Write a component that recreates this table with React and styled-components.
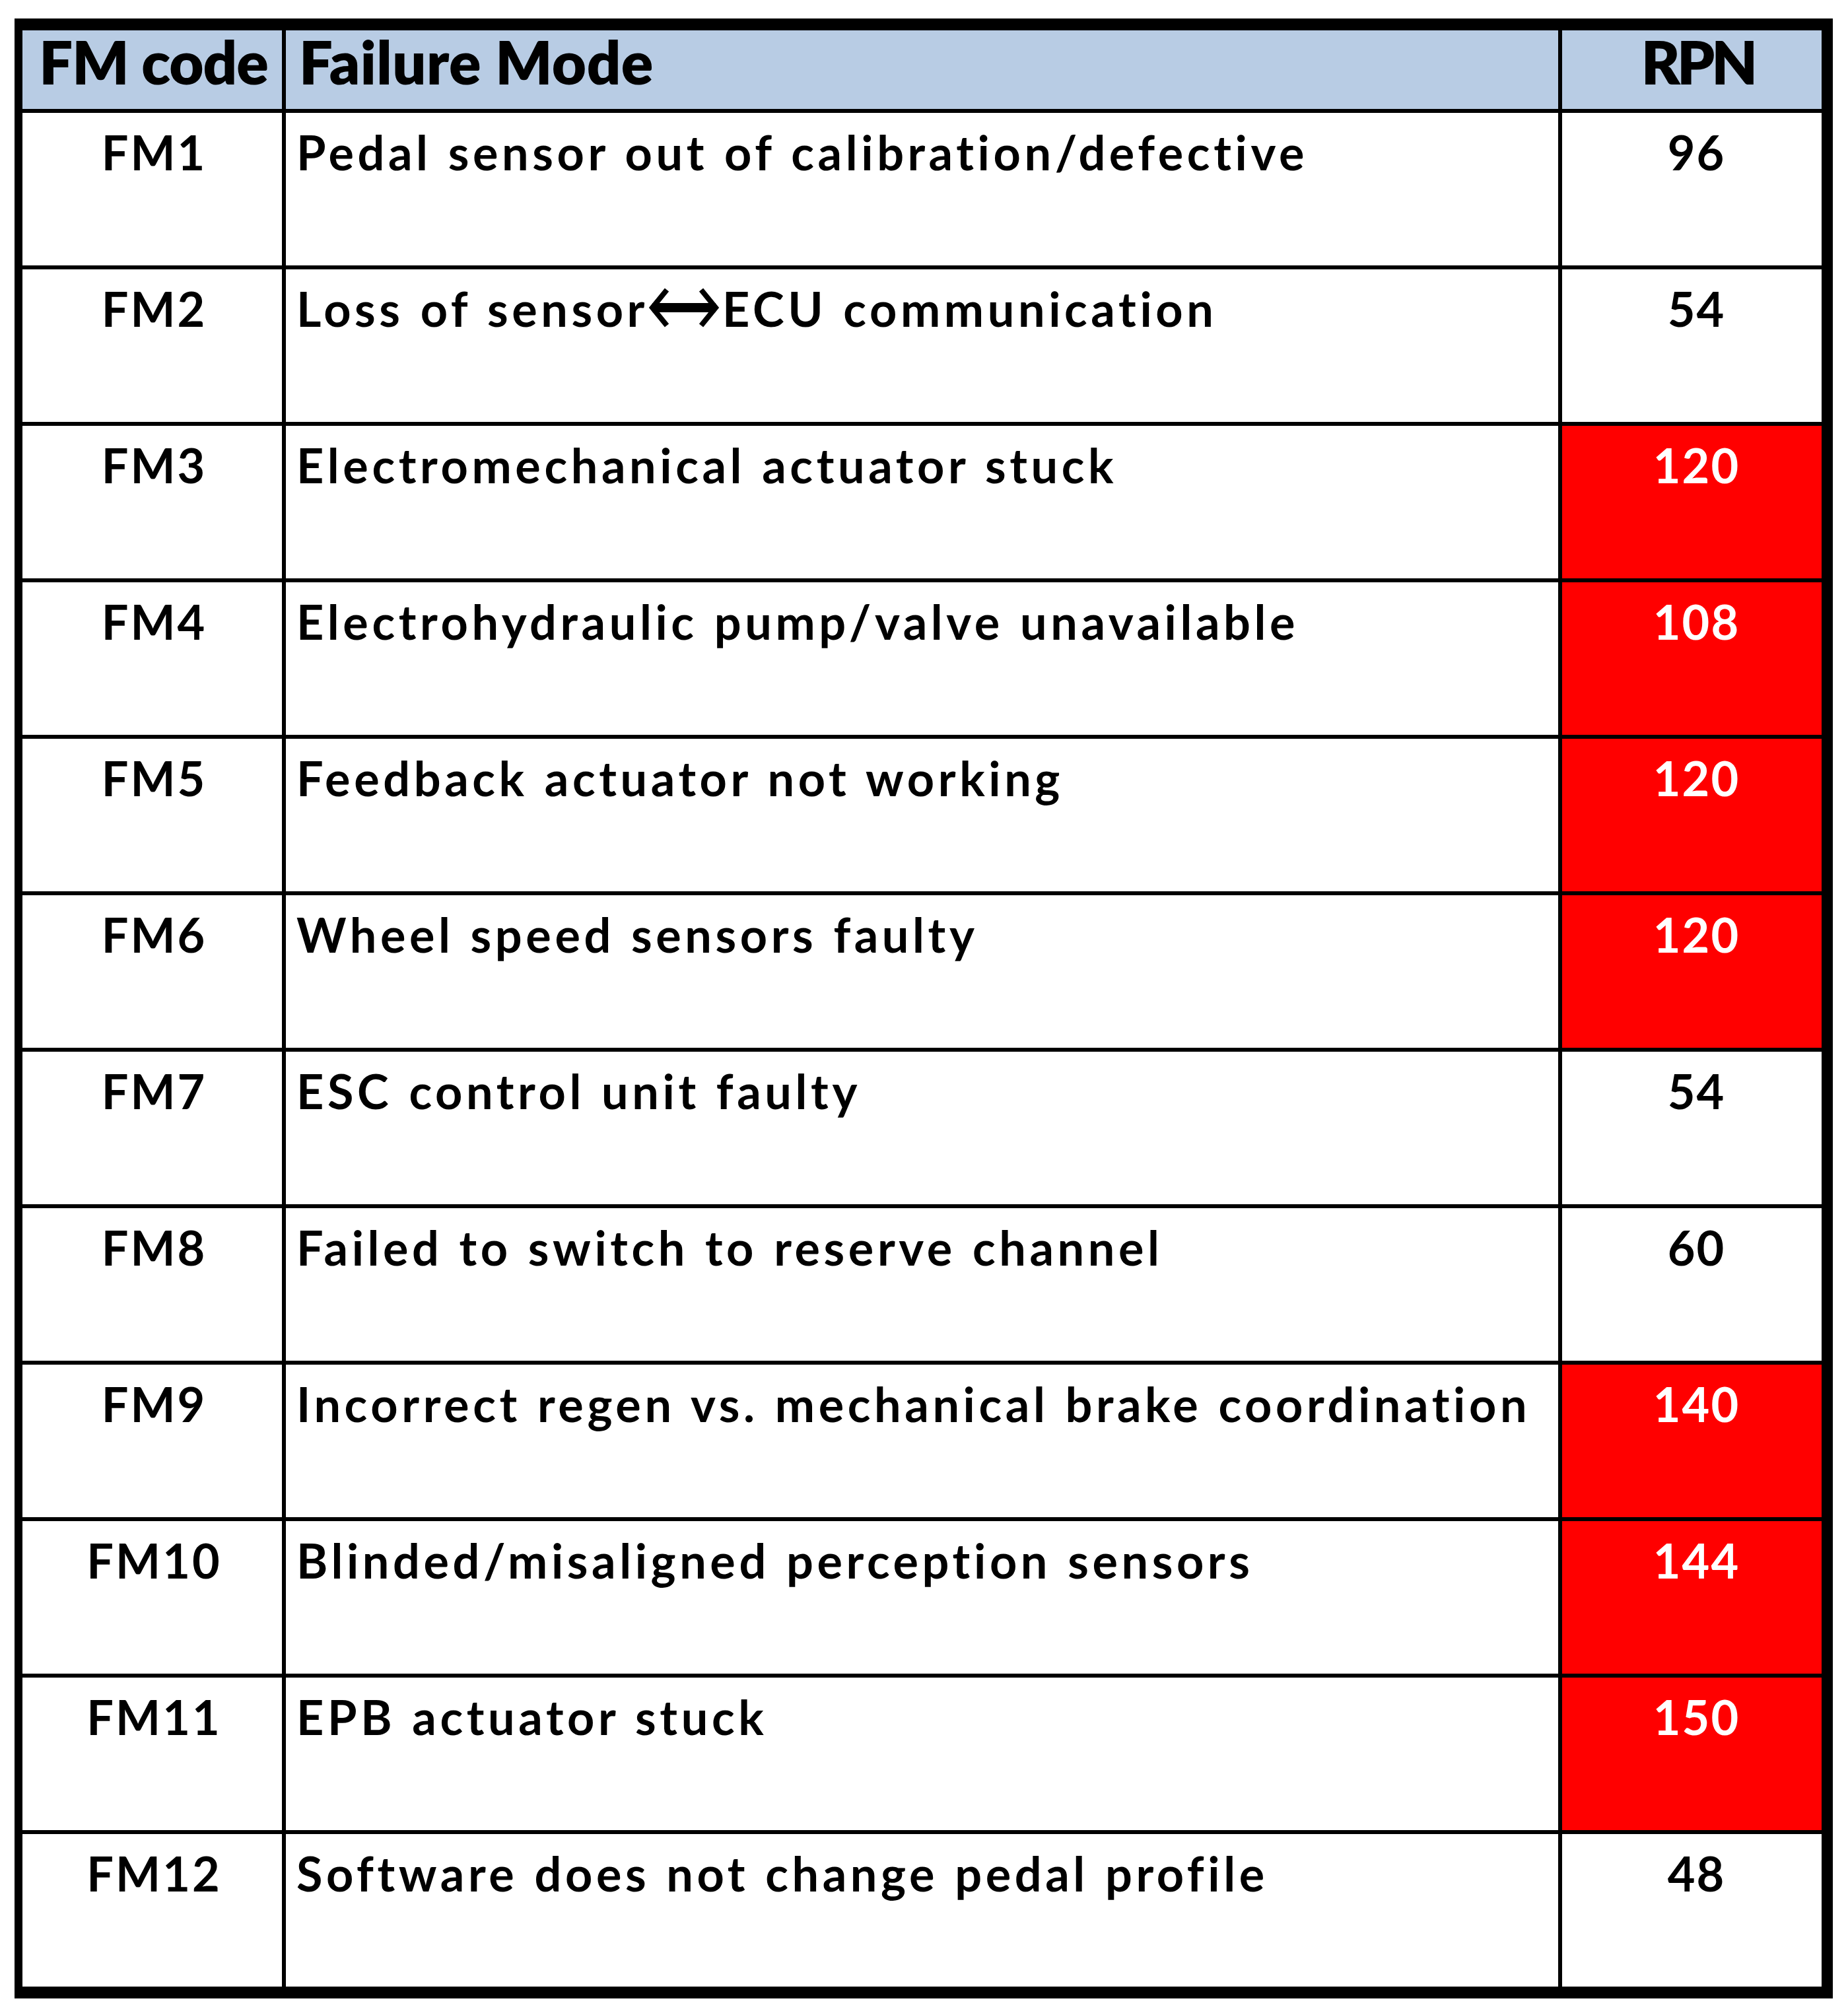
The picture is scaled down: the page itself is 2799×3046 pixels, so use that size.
import React from "react";
import styled, { createGlobalStyle } from "styled-components";

const GlobalStyle = createGlobalStyle`
  html, body {
    margin: 0;
    padding: 0;
    background: #ffffff;
  }
  body {
    font-family: Lato, "Liberation Sans", sans-serif;
    color: #000;
  }
`;

const rows = [
  { code: "FM1", mode: "Pedal sensor out of calibration/defective", rpn: 96 },
  { code: "FM2", mode: ["Loss of sensor", "ECU communication"], rpn: 54 },
  { code: "FM3", mode: "Electromechanical actuator stuck", rpn: 120, hot: true },
  { code: "FM4", mode: "Electrohydraulic pump/valve unavailable", rpn: 108, hot: true },
  { code: "FM5", mode: "Feedback actuator not working", rpn: 120, hot: true },
  { code: "FM6", mode: "Wheel speed sensors faulty", rpn: 120, hot: true },
  { code: "FM7", mode: "ESC control unit faulty", rpn: 54 },
  { code: "FM8", mode: "Failed to switch to reserve channel", rpn: 60 },
  { code: "FM9", mode: "Incorrect regen vs. mechanical brake coordination", rpn: 140, hot: true },
  { code: "FM10", mode: "Blinded/misaligned perception sensors", rpn: 144, hot: true },
  { code: "FM11", mode: "EPB actuator stuck", rpn: 150, hot: true },
  { code: "FM12", mode: "Software does not change pedal profile", rpn: 48 },
];

// ── Layout ───────────────────────────────────────────────────────────────────

const Page = styled.div`
  width: 2799px;
  min-height: 3046px;
  padding: 28px 0 0 22px;
  box-sizing: border-box;
`;

const Frame = styled.div`
  display: inline-block;
  border-style: solid;
  border-color: #000;
  border-width: 18px 17px 18px 12px;
`;

const Grid = styled.div`
  display: grid;
  grid-template-columns: 393px 1927px 393px;
  grid-template-rows: 119px repeat(12, 231px);
  gap: 6px;
  background: #000;
`;

// ── Cells ────────────────────────────────────────────────────────────────────

const HeadCell = styled.div`
  background: #b8cce4;
  font-size: 90px;
  font-weight: 800;
  line-height: 1;
  padding-top: 2px;
  letter-spacing: ${({ spacing }) => spacing || "0"};
  white-space: nowrap;
  text-align: ${({ align }) => align || "center"};
  padding-left: ${({ indent }) => indent || "0"};
  box-sizing: border-box;
`;

const Cell = styled.div`
  background: ${({ hot }) => (hot ? "#ff0000" : "#ffffff")};
  color: ${({ hot }) => (hot ? "#ffffff" : "#000000")};
  font-size: 72px;
  font-weight: 700;
  line-height: 1.2;
  padding-top: 16px;
  white-space: nowrap;
  text-align: ${({ align }) => align || "center"};
  padding-left: ${({ indent }) => indent || "0"};
  letter-spacing: ${({ spacing }) => spacing || "0"};
  word-spacing: ${({ words }) => words || "0"};
  box-sizing: border-box;
`;

const ArrowMark = styled.svg`
  display: inline-block;
  width: 108px;
  height: 62px;
  vertical-align: -2px;
  margin: 0 4px 0 0;
`;

const BiArrow = () => (
  <ArrowMark viewBox="0 0 108 62" aria-hidden="true">
    <path d="M6 31 H102" stroke="#000" strokeWidth="14" fill="none" />
    <path
      d="M28 4 L6 31 L28 58 M80 4 L102 31 L80 58"
      stroke="#000"
      strokeWidth="8"
      fill="none"
      strokeLinejoin="miter"
    />
  </ArrowMark>
);

const App = () => {
  return (
    <Page>
      <GlobalStyle />
      <Frame>
        <Grid>
          <HeadCell spacing="-1px" indent="4px">FM code</HeadCell>
          <HeadCell align="left" indent="20px" spacing="0.5px">
            Failure Mode
          </HeadCell>
          <HeadCell indent="18px" spacing="-5px">
            RPN
          </HeadCell>

          {rows.map((r) => (
            <React.Fragment key={r.code}>
              <Cell spacing="3px" indent="6px">
                {r.code}
              </Cell>
              <Cell align="left" indent="16px" spacing="5.6px" words="2px">
                {Array.isArray(r.mode) ? (
                  <>
                    {r.mode[0]}
                    <BiArrow />
                    {r.mode[1]}
                  </>
                ) : (
                  r.mode
                )}
              </Cell>
              <Cell hot={r.hot} spacing="2px" indent="14px">
                {r.rpn}
              </Cell>
            </React.Fragment>
          ))}
        </Grid>
      </Frame>
    </Page>
  );
};

export default App;
